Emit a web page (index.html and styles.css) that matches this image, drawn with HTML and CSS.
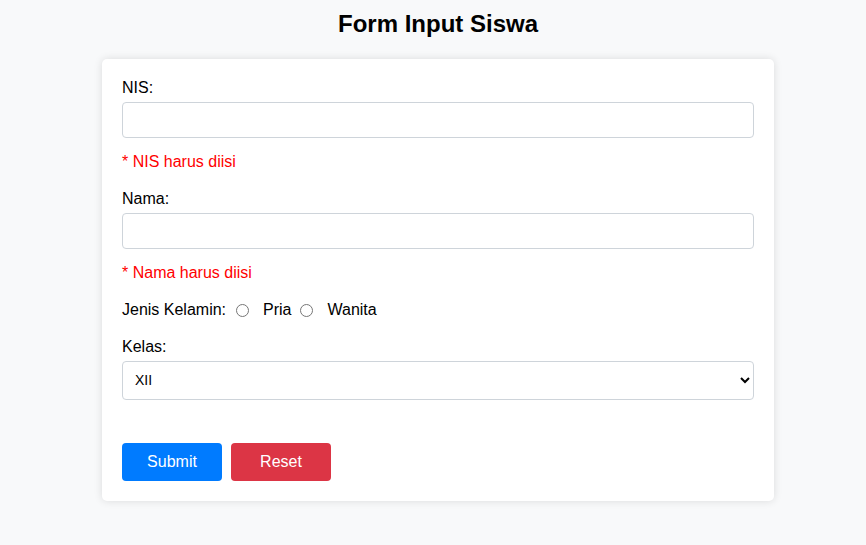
FILE: index.html
```html
<!DOCTYPE html>
<html>
<head>
<meta charset="utf-8">
<link rel="stylesheet" href="styles.css">
</head>
<body>
<h2 class="title">Form Input Siswa</h2>
<div class="card">
  <div class="group">
    <label class="label">NIS:</label>
    <input class="field" type="text">
    <div class="error">* NIS harus diisi</div>
  </div>
  <div class="group">
    <label class="label">Nama:</label>
    <input class="field" type="text">
    <div class="error">* Nama harus diisi</div>
  </div>
  <div class="group radio-row">
    <span>Jenis Kelamin:</span>
    <input class="radio" type="radio" name="jk"><span>Pria</span>
    <input class="radio radio-next" type="radio" name="jk"><span>Wanita</span>
  </div>
  <div class="group">
    <label class="label">Kelas:</label>
    <select class="field select">
      <option>XII</option>
    </select>
  </div>
  <div class="actions">
    <button class="btn btn-blue">Submit</button>
    <button class="btn btn-red">Reset</button>
  </div>
</div>
</body>
</html>
```
FILE: styles.css
```css
html, body {
  margin: 0;
  padding: 0;
}
body {
  background: #f8f9fa;
  font-family: "Liberation Sans", Arial, sans-serif;
  font-size: 16px;
  color: #000;
  padding: 8px 0 8px 10px;
}
.title {
  text-align: center;
  font-size: 24px;
  font-weight: bold;
  margin: 2px 0 21px 0;
}
.card {
  width: 672px;
  box-sizing: border-box;
  margin: 0 auto;
  background: #fff;
  padding: 20px;
  border-radius: 5px;
  box-shadow: 0 0 8px rgba(0,0,0,0.12);
}
.group {
  margin-bottom: 19px;
}
.label {
  display: block;
  margin-bottom: 5px;
}
.field {
  display: block;
  width: 100%;
  box-sizing: border-box;
  padding: 8px;
  height: 36px;
  border: 1px solid #ced4da;
  border-radius: 4px;
  font-family: "Liberation Sans", Arial, sans-serif;
  font-size: 16px;
  background: #fff;
}
.select {
  height: 38.5px;
  font-size: 14px;
  color: #000;
}
.error {
  color: #ff0000;
  margin-top: 15px;
}
.radio-row {
  display: flex;
  align-items: center;
  margin-top: 2px;
  margin-bottom: 19px;
}
.radio {
  margin: 0 14px 0 10px;
  width: 13px;
  height: 13px;
}
.radio-next {
  margin-left: 8px;
  margin-right: 15px;
}
.actions {
  display: flex;
  gap: 9px;
  margin-top: 43.5px;
}
.btn {
  width: 100px;
  height: 38px;
  border: none;
  border-radius: 4px;
  color: #fff;
  font-family: "Liberation Sans", Arial, sans-serif;
  font-size: 16px;
  cursor: pointer;
}
.btn-blue {
  background: #007bff;
}
.btn-red {
  background: #dc3545;
}
```
